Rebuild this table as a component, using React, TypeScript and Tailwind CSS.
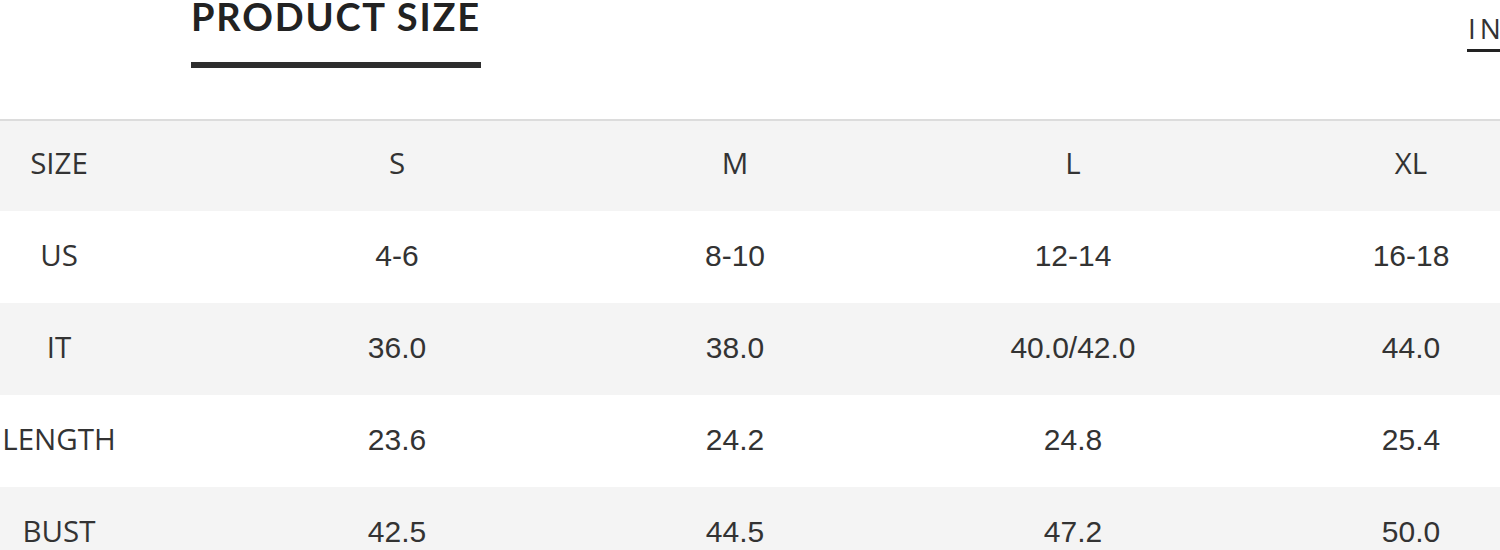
const columns = ["S", "M", "L", "XL"];

const rows: { label: string; values: string[] }[] = [
  { label: "US", values: ["4-6", "8-10", "12-14", "16-18"] },
  { label: "IT", values: ["36.0", "38.0", "40.0/42.0", "44.0"] },
  { label: "LENGTH", values: ["23.6", "24.2", "24.8", "25.4"] },
  { label: "BUST", values: ["42.5", "44.5", "47.2", "50.0"] },
];

const letterFont = "font-['Open_Sans',sans-serif] text-[29.5px]";
const digitFont = "font-['Liberation_Sans',Arial,sans-serif] text-[30px]";

export default function App() {
  return (
    <div className="relative h-[550px] w-[1500px] overflow-hidden bg-white text-[#333]">
      <div className="flex h-[119px] items-start">
        <div className="ml-[191px] flex flex-col">
          <h2 className="whitespace-nowrap font-['Lato',sans-serif] text-[38px] font-bold leading-[32px] tracking-[1.8px] text-[#222]">
            PRODUCT SIZE
          </h2>
          <div className="mt-[30px] h-[6px] w-[290px] bg-[#2e2e2e]" />
        </div>
        <div className="ml-auto mr-[-40px] mt-[11px] flex flex-col">
          <span className="pl-[1px] font-['Open_Sans',sans-serif] text-[28px] leading-[34px] tracking-[4px] text-[#333]">
            IN
          </span>
          <div className="mt-[4px] h-[3px] w-[73px] bg-[#222]" />
        </div>
      </div>

      <div className="ml-[-110px] w-[1690px] border-t-2 border-[#dcdcdc]">
        <div className={`flex h-[90px] items-center bg-[#f4f4f4] pb-[5px] ${letterFont}`}>
          <div className="w-[338px] text-center">SIZE</div>
          {columns.map((c) => (
            <div key={c} className="w-[338px] text-center">
              {c}
            </div>
          ))}
        </div>
        {rows.map((row, i) => (
          <div
            key={row.label}
            className={`flex h-[92px] items-center pb-[4px] ${i % 2 === 0 ? "bg-white" : "bg-[#f4f4f4]"}`}
          >
            <div className={`w-[338px] text-center ${letterFont}`}>{row.label}</div>
            {row.values.map((v, j) => (
              <div key={j} className={`w-[338px] text-center ${digitFont}`}>
                {v}
              </div>
            ))}
          </div>
        ))}
      </div>
    </div>
  );
}
